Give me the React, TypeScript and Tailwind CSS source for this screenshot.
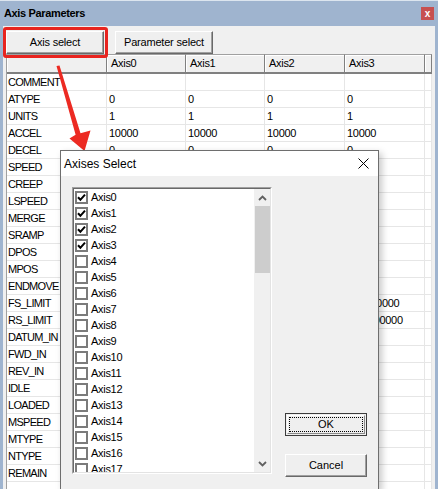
import React from "react";

const labels = [
  "COMMENT","ATYPE","UNITS","ACCEL","DECEL","SPEED","CREEP","LSPEED","MERGE","SRAMP","DPOS","MPOS","ENDMOVE",
  "FS_LIMIT","RS_LIMIT","DATUM_IN","FWD_IN","REV_IN","IDLE","LOADED","MSPEED","MTYPE","NTYPE","REMAIN","",
];

const values: Record<string, string[]> = {
  ATYPE: ["0", "0", "0", "0"],
  UNITS: ["1", "1", "1", "1"],
  ACCEL: ["10000", "10000", "10000", "10000"],
  DECEL: ["0", "0", "0", "0"],
  FS_LIMIT: ["200000000", "200000000", "200000000", "200000000"],
  RS_LIMIT: ["-200000000", "-200000000", "-200000000", "-200000000"],
};

const colW = ["w-[79px]", "w-[79px]", "w-[80px]", "w-[80px]"];

function Check() {
  return (
    <svg width="9" height="9" viewBox="0 0 9 9" className="block">
      <path d="M1 4.2 L3.4 6.8 L8 1.6" fill="none" stroke="#000" strokeWidth="2" />
    </svg>
  );
}

export default function App() {
  const axes = Array.from({ length: 18 }, (_, i) => i);
  return (
    <div className="relative w-[438px] h-[489px] overflow-hidden bg-[#9fb4cf] font-['Liberation_Sans',Arial,sans-serif] text-[11px] text-black">
      {/* Title bar */}
      <div className="h-[26px] border-t border-[#dce5ef] flex items-center justify-between pl-[4px] pr-[4px]">
        <span className="font-bold text-[11px] tracking-[-0.35px]">Axis Parameters</span>
        <div className="w-[13px] h-[13px] bg-[#c75050] flex items-center justify-center text-white text-[10px] font-bold leading-none">
          x
        </div>
      </div>

      {/* Main content */}
      <div className="mx-[3px] h-[463px] bg-[#f0f0f0] flex flex-col">
        <div className="h-[30px] flex items-start pt-[5px] pl-[3px] gap-[11px]">
          <div className="w-[98px] h-[23px] flex items-center justify-center bg-[#efefef] border border-t-white border-l-white border-r-[#696969] border-b-[#696969] shadow-[inset_-1px_-1px_0_#a0a0a0] tracking-[-0.2px]">
            Axis select
          </div>
          <div className="w-[98px] h-[23px] flex items-center justify-center bg-[#efefef] border border-t-white border-l-white border-r-[#696969] border-b-[#696969] shadow-[inset_-1px_-1px_0_#a0a0a0] tracking-[-0.2px]">
            Parameter select
          </div>
        </div>

        {/* Grid */}
        <div className="ml-[3px] w-[426px] border-l border-[#a0a0a0] flex flex-col tracking-[-0.3px]">
          <div className="flex h-[20px]">
            <div className="w-[100px] h-[20px] bg-[#f0f0f0] border-t border-t-[#a0a0a0] border-b-2 border-b-[#808080] border-r border-r-[#808080] shadow-[inset_1px_1px_0_#fff]" />
            {["Axis0", "Axis1", "Axis2", "Axis3"].map((a, i) => (
              <div
                key={a}
                className={`${colW[i]} h-[20px] bg-[#f0f0f0] border-t border-t-[#a0a0a0] border-b-2 border-b-[#808080] border-r border-r-[#808080] shadow-[inset_1px_1px_0_#fff] pl-[4px] flex items-center`}
              >
                {a}
              </div>
            ))}
            <div className="w-[7px] h-[20px] bg-[#f0f0f0] border-t border-t-[#a0a0a0] border-b-2 border-b-[#808080] border-r border-r-[#808080] shadow-[inset_1px_1px_0_#fff]" />
          </div>
          {labels.map((l, r) => (
            <div key={r} className="flex h-[17px]">
              <div className="w-[100px] h-[17px] bg-white border-b border-r border-[#e6e6e6] pl-[1px] flex items-center whitespace-nowrap overflow-hidden tracking-[-0.7px]">
                {l}
              </div>
              {[0, 1, 2, 3].map((c) => (
                <div
                  key={c}
                  className={`${colW[c]} h-[17px] bg-white border-b border-r border-[#e6e6e6] pl-[2px] flex items-center whitespace-nowrap overflow-hidden`}
                >
                  {values[l]?.[c] ?? ""}
                </div>
              ))}
              <div className="w-[7px] h-[17px] bg-white border-b border-r border-[#e6e6e6]" />
            </div>
          ))}
        </div>
      </div>

      {/* Red highlight */}
      <div className="absolute left-[3px] top-[27px] w-[105px] h-[31px] border-[3px] border-[#e8241f] rounded-[3px]" />

      {/* Red arrow */}
      <svg className="absolute left-0 top-0" width="438" height="489" viewBox="0 0 438 489">
        <path d="M56.5 66 L59.5 65.5 L80.5 133.3 L90.5 130.5 L84.5 151 L69.5 138.5 L75.6 134.7 Z" fill="#ec2a22" />
      </svg>

      {/* Dialog */}
      <div className="absolute left-[60px] top-[150px] w-[319px] h-[340px] border border-[#6e6e6e] bg-[#f0f0f0] shadow-[3px_3px_7px_rgba(0,0,0,0.22)] flex flex-col">
        <div className="h-[25px] bg-white flex items-center justify-between pl-[3px] pr-[9px]">
          <span className="text-[12px]">Axises Select</span>
          <svg width="11" height="11" viewBox="0 0 11 11">
            <path d="M0.5 0.5 L10.5 10.5 M10.5 0.5 L0.5 10.5" stroke="#000" strokeWidth="1" fill="none" />
          </svg>
        </div>
        <div className="flex pl-[11px] pt-[11px] gap-[13px]">
          {/* Listbox */}
          <div className="w-[200px] h-[287px] border border-t-[#a0a0a0] border-l-[#a0a0a0] border-r-white border-b-white">
            <div className="w-full h-full border border-t-[#696969] border-l-[#696969] border-r-[#e3e3e3] border-b-[#e3e3e3] flex">
              <div className="flex-1 bg-white overflow-hidden flex flex-col tracking-[-0.3px]">
                {axes.map((i) => (
                  <div key={i} className="h-[16px] shrink-0 flex items-center pl-[1px] gap-[3px]">
                    <div className="w-[13px] h-[13px] border-2 border-[#7b7b7b] bg-white flex items-center justify-center">
                      {i < 4 ? <Check /> : null}
                    </div>
                    <span>Axis{i}</span>
                  </div>
                ))}
              </div>
              <div className="w-[16px] bg-[#f0f0f0] flex flex-col items-center">
                <div className="h-[17px] flex items-center justify-center">
                  <svg width="9" height="6" viewBox="0 0 9 6">
                    <path d="M1 5 L4.5 1.5 L8 5" stroke="#606060" strokeWidth="1.8" fill="none" />
                  </svg>
                </div>
                <div className="w-[15px] h-[67px] bg-[#cdcdcd]" />
                <div className="flex-1" />
                <div className="h-[17px] flex items-center justify-center">
                  <svg width="9" height="6" viewBox="0 0 9 6">
                    <path d="M1 1 L4.5 4.5 L8 1" stroke="#606060" strokeWidth="1.8" fill="none" />
                  </svg>
                </div>
              </div>
            </div>
          </div>
          {/* Buttons */}
          <div className="flex flex-col pt-[226px] gap-[18px]">
            <div className="w-[82px] h-[23px] border border-[#3c3c3c] bg-[#efefef] p-[1px]">
              <div className="w-full h-full border border-t-white border-l-white border-r-[#8a8a8a] border-b-[#8a8a8a] p-[1px]">
                <div className="w-full h-full border border-dotted border-black flex items-center justify-center">
                  OK
                </div>
              </div>
            </div>
            <div className="w-[82px] h-[23px] flex items-center justify-center bg-[#efefef] border border-t-white border-l-white border-r-[#696969] border-b-[#696969] shadow-[inset_-1px_-1px_0_#a0a0a0]">
              Cancel
            </div>
          </div>
        </div>
      </div>
    </div>
  );
}
